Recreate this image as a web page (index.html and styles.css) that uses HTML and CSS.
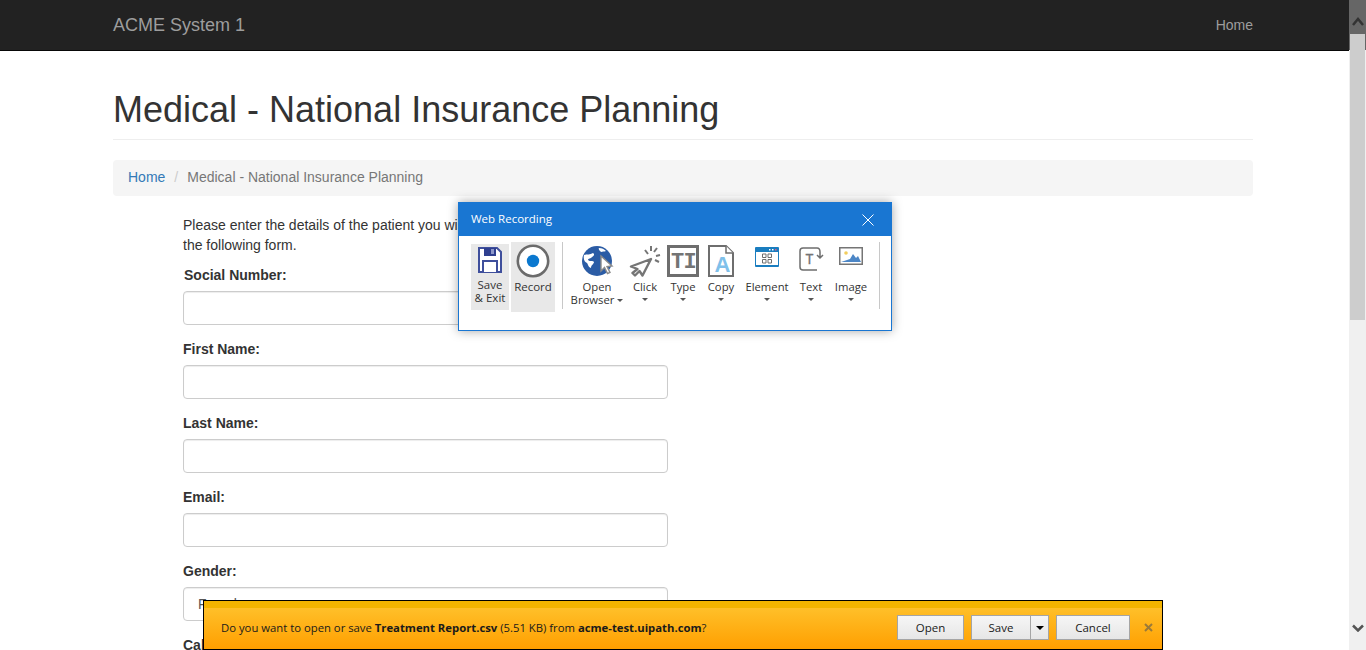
FILE: index.html
```html
<!DOCTYPE html>
<html>
<head>
    <title>Medical - National Insurance Planning</title>
    <link rel="stylesheet" href="styles.css">
</head>
<body>

<nav class="navbar">
    <div class="container navbar-inner">
        <a class="brand">ACME System 1</a>
        <a class="nav-link">Home</a>
    </div>
</nav>

<div class="container">
    <div class="page-header">
        <h1>Medical - National Insurance Planning</h1>
    </div>

    <ol class="breadcrumb">
        <li><a>Home</a></li>
        <li class="crumb-sep">/</li>
        <li class="crumb-active">Medical - National Insurance Planning</li>
    </ol>

    <div class="form-wrap">
        <p class="intro">Please enter the details of the patient you wish to plan for by filling in<br>the following form.</p>

        <div class="form-group">
            <label class="first-label">Social Number:</label>
            <input type="text" class="form-control">
        </div>
        <div class="form-group">
            <label>First Name:</label>
            <input type="text" class="form-control">
        </div>
        <div class="form-group">
            <label>Last Name:</label>
            <input type="text" class="form-control">
        </div>
        <div class="form-group">
            <label>Email:</label>
            <input type="text" class="form-control">
        </div>
        <div class="form-group">
            <label>Gender:</label>
            <select class="form-control select-control">
                <option>Female</option>
            </select>
        </div>
        <div class="form-group">
            <label>Calendar:</label>
        </div>
    </div>
</div>

<!-- Web Recording window -->
<div class="recorder">
    <div class="recorder-title">
        <span>Web Recording</span>
        <svg class="recorder-close" width="12" height="12" viewBox="0 0 12 12"><path d="M.5.5l11 11M11.500.5l-11 11" stroke="#fff" fill="none"/></svg>
    </div>
    <div class="recorder-body">
        <div class="rec-btn save-btn">
            <svg width="24" height="26" viewBox="0 0 24 26">
                <path d="M1 1h18l4 4v20H1z" fill="#fff" stroke="#3f4f9c" stroke-width="2"/>
                <rect x="6" y="1" width="12" height="8" fill="#2f3f8f"/>
                <rect x="13" y="2" width="3" height="5" fill="#8d97c9"/>
                <path d="M5 25V14h14v11" fill="#fff" stroke="#3f4f9c" stroke-width="2"/>
            </svg>
            <span class="save-label">Save<br>&amp; Exit</span>
        </div>
        <div class="rec-btn record-btn">
            <svg width="34" height="34" viewBox="0 0 34 34">
                <circle cx="17" cy="17" r="15.200" fill="#fff" stroke="#6b6b6b" stroke-width="2.600"/>
                <circle cx="17" cy="17" r="6.200" fill="#0a78cf"/>
            </svg>
            <span class="record-label">Record</span>
        </div>
        <div class="tool-sep first-sep"></div>
        <div class="tools">
            <div class="tool">
                <svg width="36" height="32" viewBox="0 0 36 32">
                    <circle cx="18" cy="16" r="15" fill="#2b5ca5"/>
                    <path d="M5 10c3-1 6 0 9-2 2 1 1 3-1 4-1 2-4 1-4 3 2 2 5 0 6 2 0 2-3 3-3 6-3-1-3-4-4-5-2-1-4-3-3-8zM20 3c3 0 5 1 7 3-2 1-3 0-4 1-2 0-4-3-3-4z" fill="#fff"/>
                    <path d="M22 11l11 10-5 .5 3 6-2.500 1-3-6-3.500 3.500z" fill="#fff" stroke="#8a8a8a" stroke-width="1.400"/>
                </svg>
                <span class="tool-label">Open<br>Browser<i class="caret inline-caret"></i></span>
            </div>
            <div class="tool">
                <svg width="32" height="32" viewBox="0 0 32 32">
                    <path d="M22 14L2 21.500l6.500 2.500L3.500 28 6 30.500l4.500-4.500 3 4.500z" fill="#fff" stroke="#757575" stroke-width="2.400" stroke-linejoin="round"/>
                    <path d="M16 5l3 4M22 1v5M28 3l-3 4M31 10l-4 1M30 17l-4-2" stroke="#757575" stroke-width="2" fill="none"/>
                </svg>
                <span class="tool-label">Click</span>
                <i class="caret"></i>
            </div>
            <div class="tool">
                <svg width="32" height="32" viewBox="0 0 32 32">
                    <rect x="1.500" y="1.500" width="29" height="29" fill="#fff" stroke="#6e6e6e" stroke-width="3"/>
                    <text x="4" y="23" class="icon-glyph" font-size="22">T</text>
                    <text x="16.500" y="23" class="icon-glyph" font-size="22">I</text>
                </svg>
                <span class="tool-label">Type</span>
                <i class="caret"></i>
            </div>
            <div class="tool">
                <svg width="26" height="32" viewBox="0 0 26 32">
                    <path d="M1 1h17l7 7v23H1z" fill="#fff" stroke="#6e6e6e" stroke-width="2"/>
                    <path d="M18 1v7h7" fill="#fff" stroke="#6e6e6e" stroke-width="1.500"/>
                    <text x="14.500" y="27" class="icon-letter" font-size="22" text-anchor="middle">A</text>
                </svg>
                <span class="tool-label">Copy</span>
                <i class="caret"></i>
            </div>
            <div class="tool">
                <svg class="element-icon" width="24" height="20" viewBox="0 0 24 20">
                    <rect width="24" height="20" rx="1" fill="#1a7dbf"/>
                    <rect x="1" y="5" width="22" height="13" fill="#fff"/>
                    <rect x="14" y="2" width="1.500" height="1.500" fill="#fff"/>
                    <rect x="17" y="2" width="1.500" height="1.500" fill="#fff"/>
                    <rect x="20" y="2" width="1.500" height="1.500" fill="#e9577f"/>
                    <path d="M7.500 7h3.500v3.500H7.500zM13 7h3.500v3.500H13zM7.500 12.500h3.500V16H7.500zM13 12.500h3.500V16H13z" fill="#fff" stroke="#6e6e6e"/>
                </svg>
                <span class="tool-label">Element</span>
                <i class="caret"></i>
            </div>
            <div class="tool">
                <svg class="text-icon" width="25" height="24" viewBox="0 0 25 24">
                    <path d="M18 1H4Q1 1 1 4v16q0 3 3 3h14" fill="none" stroke="#6e6e6e" stroke-width="1.500"/>
                    <path d="M18 1q3 0 3 4v5M18 8l3 3 3-3" fill="none" stroke="#6e6e6e" stroke-width="1.500"/>
                    <text x="10.500" y="17" class="icon-glyph thin-glyph" font-size="14" text-anchor="middle">T</text>
                </svg>
                <span class="tool-label">Text</span>
                <i class="caret"></i>
            </div>
            <div class="tool">
                <svg class="image-icon" width="24" height="18" viewBox="0 0 24 18">
                    <rect x=".750" y=".750" width="22.500" height="16.500" fill="#fff" stroke="#757575" stroke-width="1.500"/>
                    <circle cx="7" cy="6" r="1.800" fill="#f2cd5c"/>
                    <path d="M2 15l6-2 3-1 3-5 3 4 2-2 3 6z" fill="#4c86c6"/>
                </svg>
                <span class="tool-label">Image</span>
                <i class="caret"></i>
            </div>
        </div>
        <div class="tool-sep last-sep"></div>
    </div>
</div>

<!-- IE download bar -->
<div class="download-bar">
    <div class="download-band"></div>
    <div class="download-main">
        <span class="download-msg">Do you want to open or save <b>Treatment Report.csv</b> (5.51 KB) from <b>acme-test.uipath.com</b>?</span>
        <div class="download-actions">
            <button class="ie-btn open-btn">Open</button>
            <div class="ie-split">
                <button class="ie-btn split-main">Save</button>
                <button class="ie-btn split-arrow"><i class="split-caret"></i></button>
            </div>
            <button class="ie-btn cancel-btn">Cancel</button>
            <svg class="bar-close" width="9" height="9" viewBox="0 0 9 9"><path d="M1 1l7 7M8 1L1 8" stroke="#9a7a3a" stroke-width="2" fill="none"/></svg>
        </div>
    </div>
</div>

<!-- page scrollbar -->
<div class="scrollbar">
    <div class="scroll-thumb"></div>
    <svg class="scroll-up" width="12" height="9" viewBox="0 0 12 9"><path d="M1 8l5-6 5 6" stroke="#333" stroke-width="2.500" fill="none"/></svg>
    <svg class="scroll-down" width="12" height="8" viewBox="0 0 12 8"><path d="M1 1.500l5 5 5-5" stroke="#555" stroke-width="2.500" fill="none"/></svg>
</div>

</body>
</html>
```

FILE: styles.css
```css
html, body {
    height: 100%;
    overflow: hidden;
}

body {
    margin: 0;
    background-color: #fff;
    color: #333;
    font-family: "Liberation Sans", Arial, sans-serif;
    font-size: 14px;
    line-height: 20px;
}

.container {
    width: 1140px;
    margin: 0 auto;
}

.navbar {
    height: 50px;
    background-color: #222;
    border-bottom: 1px solid #080808;
}

.navbar-inner {
    display: flex;
    justify-content: space-between;
    align-items: center;
    height: 50px;
}

.brand {
    font-size: 18px;
    color: #9d9d9d;
}

.nav-link {
    color: #9d9d9d;
}

.page-header {
    height: 68px;
    margin: 20px 0;
    border-bottom: 1px solid #eee;
}

h1 {
    margin: 0;
    padding-top: 19px;
    font-size: 36px;
    font-weight: 400;
    line-height: 40px;
}

.breadcrumb {
    display: flex;
    height: 20px;
    margin: 0;
    padding: 7px 15px 9px;
    list-style: none;
    background-color: #f5f5f5;
    border-radius: 4px;
}

.breadcrumb a {
    color: #337ab7;
}

.crumb-sep {
    padding: 0 9px;
    color: #ccc;
}

.crumb-active {
    color: #777;
}

.form-wrap {
    width: 485px;
    margin-left: 70px;
    padding-top: 19px;
}

.intro {
    margin: 0 0 10px;
    white-space: nowrap;
}

.form-group {
    margin-bottom: 14px;
}

label {
    display: block;
    margin-bottom: 6px;
    font-weight: 700;
}

.first-label {
    margin-left: 1px;
}

.form-control {
    display: block;
    width: 100%;
    height: 34px;
    padding: 6px 12px;
    font-family: inherit;
    font-size: 14px;
    color: #555;
    background-color: #fff;
    border: 1px solid #ccc;
    border-radius: 4px;
    box-sizing: border-box;
    box-shadow: inset 0 1px 1px rgba(0, 0, 0, .075);
}

.select-control {
    padding-left: 10px;
}

/* recorder window */
.recorder {
    position: absolute;
    left: 458px;
    top: 202px;
    width: 434px;
    height: 129px;
    box-sizing: border-box;
    background-color: #fff;
    border: 1px solid #1976d2;
    box-shadow: 0 0 10px rgba(0, 0, 0, .35);
    font-family: "Open Sans", sans-serif;
    font-size: 11.500px;
    line-height: 13px;
    color: #333;
}

.recorder-title {
    display: flex;
    justify-content: space-between;
    align-items: center;
    height: 33px;
    padding: 0 17px 0 12px;
    background-color: #1976d2;
    color: #fff;
}

.recorder-title span {
    margin-bottom: 2px;
}

.recorder-body {
    display: flex;
    align-items: flex-start;
    padding: 6px 0 0 12px;
}

.rec-btn {
    display: flex;
    flex-direction: column;
    align-items: center;
    text-align: center;
    background-color: #e8e8e8;
}

.save-btn {
    width: 38px;
    height: 66px;
    margin: 2px 2px 0 0;
    padding-top: 3px;
    box-sizing: border-box;
}

.save-label {
    margin-top: 5px;
}

.record-btn {
    width: 44px;
    height: 70px;
    padding-top: 2px;
    box-sizing: border-box;
}

.record-label {
    margin-top: 2px;
}

.tool-sep {
    width: 1px;
    height: 67px;
    background-color: #c8c8c8;
}

.first-sep {
    margin: 0 7px;
}

.last-sep {
    margin-left: 7px;
}

.tools {
    display: grid;
    grid-template-columns: 54px 42px 34px 42px 50px 38px 42px;
    height: 70px;
}

.tool {
    display: flex;
    flex-direction: column;
    align-items: center;
    text-align: center;
    padding-top: 3px;
}

.tool svg {
    height: 32px;
    flex: none;
}

.element-icon, .text-icon, .image-icon {
    padding-top: 2px;
}

.tool-label {
    margin-top: 3px;
    font-size: 11.300px;
}

.tool svg.element-icon {
    height: 20px;
    padding-bottom: 10px;
}

.tool svg.text-icon {
    height: 24px;
    padding-bottom: 6px;
}

.tool svg.image-icon {
    height: 18px;
    padding-bottom: 12px;
}

.caret {
    display: block;
    width: 0;
    height: 0;
    margin-top: 5px;
    border-left: 3px solid transparent;
    border-right: 3px solid transparent;
    border-top: 3px solid #555;
}

.inline-caret {
    display: inline-block;
    margin: 0 0 2px 3px;
}

.icon-glyph {
    font-family: "Liberation Mono", monospace;
    font-weight: 700;
    fill: #747474;
}

.thin-glyph {
    font-weight: 400;
    stroke: #747474;
    stroke-width: .3px;
}

.icon-letter {
    font-family: "Liberation Sans", sans-serif;
    font-weight: 700;
    fill: #7fc0ea;
}

/* download bar */
.download-bar {
    position: absolute;
    left: 203px;
    top: 600px;
    width: 960px;
    height: 50px;
    box-sizing: border-box;
    border: 1px solid #000;
    background: linear-gradient(#ffc530, #ff9f00);
    font-family: "Open Sans", sans-serif;
    font-size: 11.300px;
    color: #1a1a1a;
}

.download-band {
    height: 7px;
    background-color: #f4b400;
}

.download-main {
    display: flex;
    justify-content: space-between;
    align-items: center;
    height: 39px;
    padding: 0 9px 0 17px;
}

.download-actions {
    display: flex;
    align-items: center;
}

.ie-btn {
    height: 25px;
    padding: 0;
    font-family: inherit;
    font-size: 11.500px;
    color: #1a1a1a;
    border: 1px solid #a5a5a5;
    background: linear-gradient(#f6f6f6, #e6e6e6);
}

.open-btn {
    width: 67px;
    margin-right: 7px;
}

.ie-split {
    display: flex;
    margin-right: 7px;
}

.split-main {
    width: 60px;
}

.split-arrow {
    display: flex;
    justify-content: center;
    align-items: center;
    width: 18px;
    border-left: 0;
}

.split-caret {
    width: 0;
    height: 0;
    border-left: 4px solid transparent;
    border-right: 4px solid transparent;
    border-top: 4px solid #000;
}

.cancel-btn {
    width: 74px;
    margin-right: 14px;
}

/* scrollbar */
.scrollbar {
    position: absolute;
    right: 0;
    top: 0;
    width: 17px;
    height: 650px;
    background: linear-gradient(#666 50px, #f0f0f0 50px);
}

.scroll-thumb {
    position: absolute;
    left: 1px;
    top: 34px;
    width: 15px;
    height: 286px;
    background-color: #cdcdcd;
}

.scroll-up {
    position: absolute;
    left: 3px;
    top: 17px;
}

.scroll-down {
    position: absolute;
    left: 3px;
    top: 624px;
}
```
